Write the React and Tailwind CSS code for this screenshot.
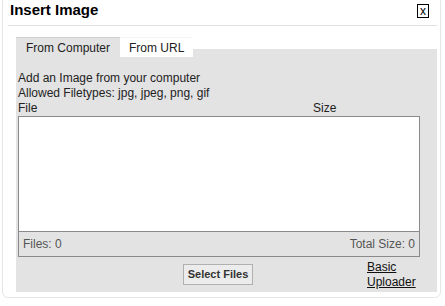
export default function App() {
  return (
    <div className="w-[445px] h-[306px] bg-white font-['Liberation_Sans',Arial,sans-serif] text-[12px] text-[#222] relative overflow-hidden">
      <div className="absolute left-[2px] top-[-4px] w-[439px] h-[302px] border border-[#e6e6e6] rounded-[6px]" />
      <div className="relative flex flex-col">
        <div className="flex items-center justify-between pl-[10px] pr-[16px] h-[20px] mt-[0px]">
          <span className="text-[15px] font-bold text-black leading-[18px]">Insert Image</span>
          <span className="w-[12px] h-[14px] border border-black flex items-center justify-center text-[12px] leading-none text-black mt-[1px]">x</span>
        </div>
        <div className="mx-[8px] mt-[5px] h-px bg-[#e0e0e0] w-[429px]" />
        <div className="ml-[16px] mt-[11px] w-[421px] flex flex-col">
          <div className="flex h-[20px]">
            <div className="bg-[#e3e3e3] border-t border-[#cfcfcf] pl-[10px] pr-[10px] flex items-center text-[12px] text-[#222]">From Computer</div>
            <div className="bg-white px-[9px] flex items-center text-[12px] text-[#222] border-t border-[#f4f4f4]">From URL</div>
          </div>
          <div className="bg-[#e3e3e3] h-[8px] -mt-[8px] ml-[177px]" />
          <div className="bg-[#e3e3e3] h-[235px] flex flex-col pl-[2px] pr-[17px] pt-[14px]">
            <div className="leading-[15px] text-[#222]">Add an Image from your computer</div>
            <div className="leading-[15px] text-[#222]">Allowed Filetypes: jpg, jpeg, png, gif</div>
            <div className="flex leading-[15px] text-[#222]">
              <span className="w-[295px]">File</span>
              <span>Size</span>
            </div>
            <div className="border border-[#8a8a8a] h-[141px] flex flex-col">
              <div className="bg-white flex-1 border-b border-[#8a8a8a]" />
              <div className="h-[24px] flex items-center justify-between px-[4px] text-[#555] text-[12px]">
                <span>Files: 0</span>
                <span>Total Size: 0</span>
              </div>
            </div>
            <div className="flex mt-[5px]">
              <div className="w-[165px]" />
              <div className="mt-[2px] h-[21px] w-[70px] border border-[#b0b0b0] bg-[#ececec] flex items-center justify-center text-[11px] font-bold text-[#333]">Select Files</div>
              <div className="ml-[114px] text-[12px] leading-[15px] text-[#111] underline -mt-[2px]">
                <div>Basic</div>
                <div>Uploader</div>
              </div>
            </div>
          </div>
        </div>
      </div>
    </div>
  );
}
